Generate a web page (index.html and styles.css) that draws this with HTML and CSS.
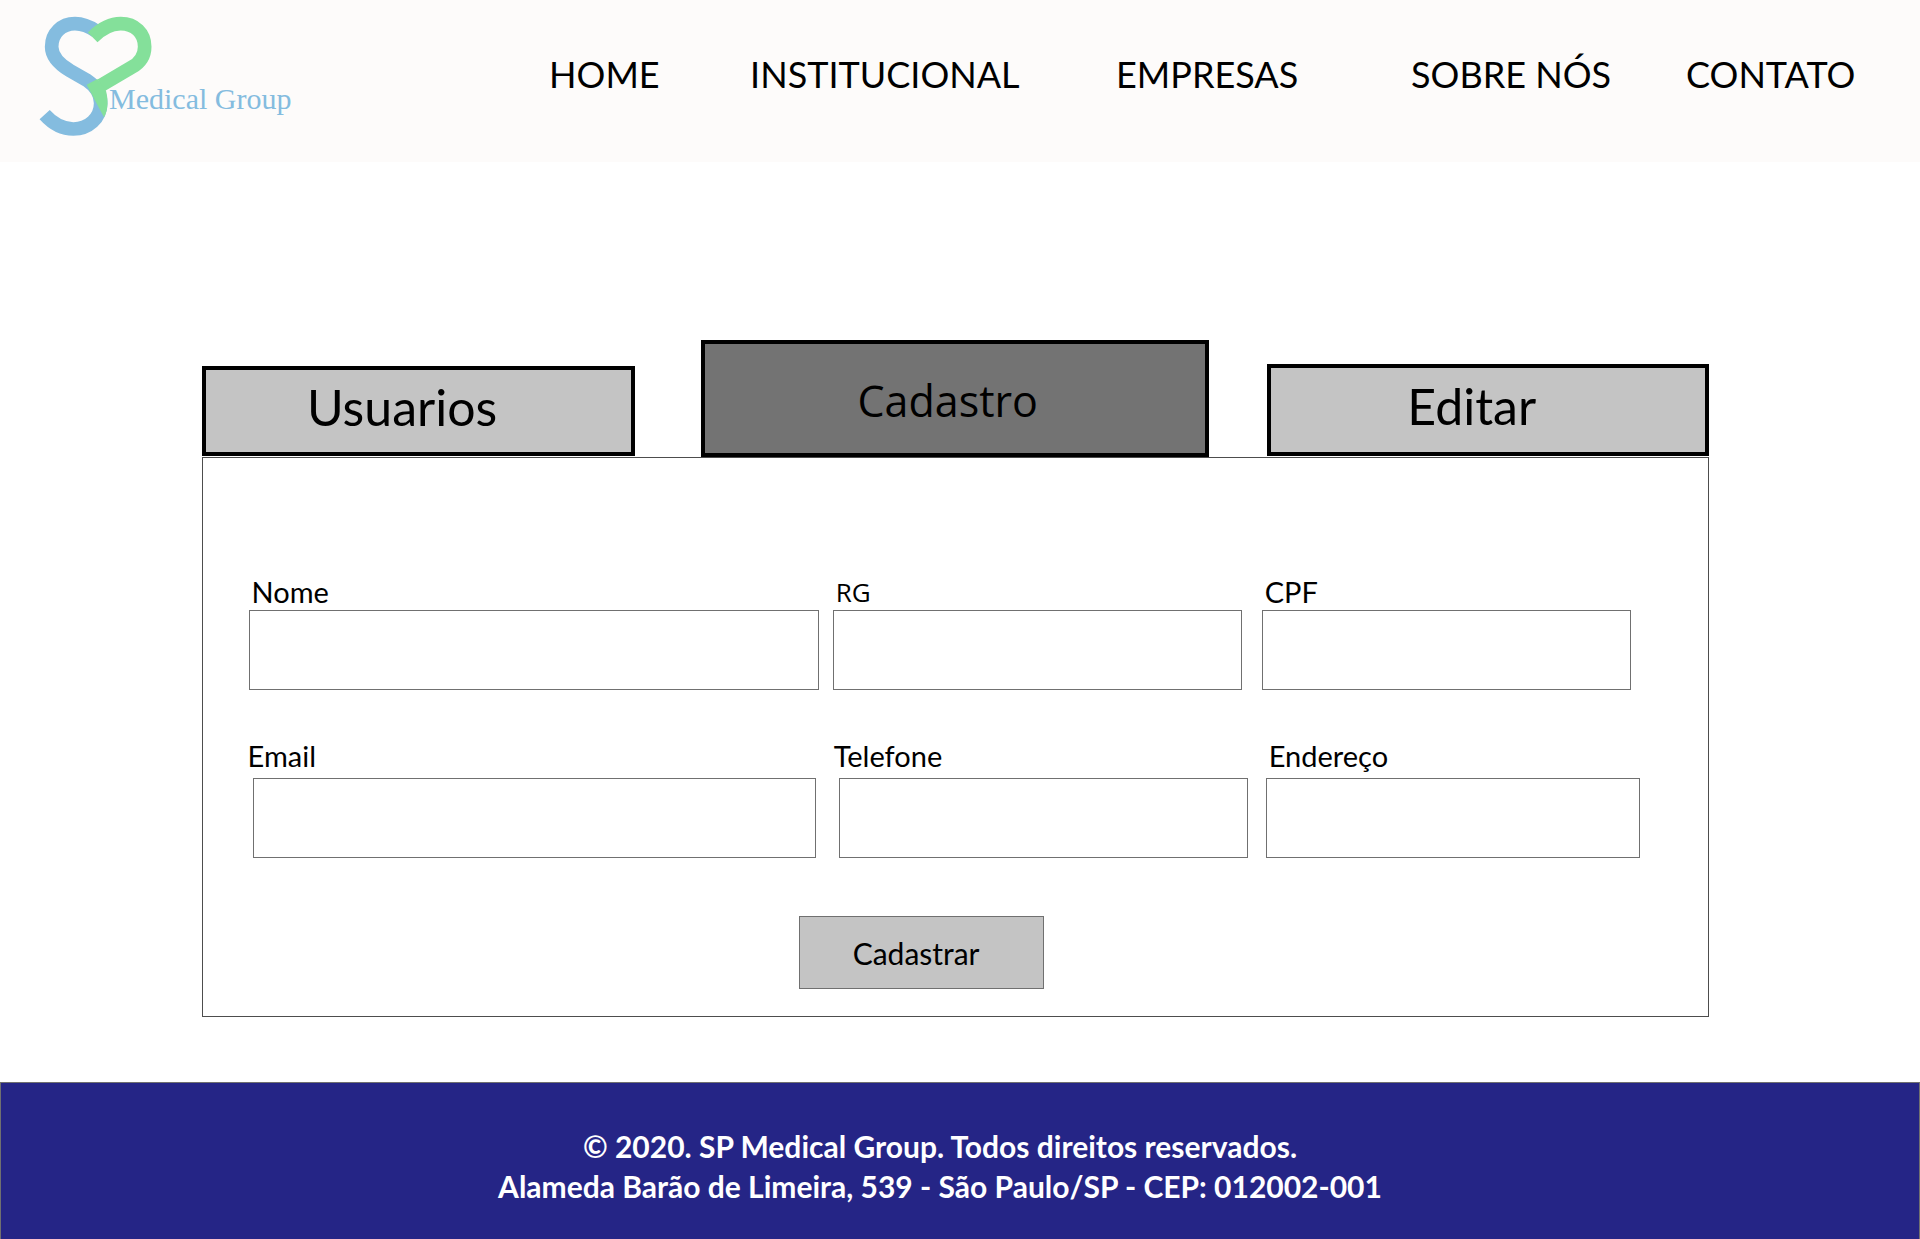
FILE: index.html
```html
<!DOCTYPE html>
<html lang="pt-BR">
<head>
  <meta charset="utf-8">
  <meta name="viewport" content="width=device-width, initial-scale=1">
  <title>SP Medical Group - Cadastro</title>
  <link rel="stylesheet" href="styles.css">
</head>
<body>
  <header class="header">
    <a class="logo" href="#" aria-label="SP Medical Group">
      <svg class="logo-art" viewBox="0 0 300 160" width="300" height="160" role="img" aria-hidden="true">
        <g transform="scale(.33333)" fill="none" stroke-width="41">
          <path stroke="#84bcdf" d="M288 93C266 78 246 71 225 71C185 71 155 100 155 140C155 172 182 195 210 212L262 242C290 261 302 285 302 310C302 355 265 387 220 387C190 387 160 373 134 344"/>
          <path stroke="#84e09a" d="M278 112C305 85 335 71 362 71C405 71 434 100 434 140C434 168 420 188 395 202L303 256"/>
          <path fill="#84e09a" stroke="none" d="M260 254L292 237L318 272C325 300 325 328 312 352Z"/>
        </g>
        <text class="logo-text" x="109" y="109">Medical Group</text>
      </svg>
    </a>
    <nav class="nav">
      <a href="#">HOME</a>
      <a href="#">INSTITUCIONAL</a>
      <a href="#">EMPRESAS</a>
      <a href="#">SOBRE NÓS</a>
      <a href="#">CONTATO</a>
    </nav>
  </header>

  <main class="main">
    <div class="tabs">
      <button class="tab tab-users" type="button">Usuarios</button>
      <button class="tab tab-register" type="button">Cadastro</button>
      <button class="tab tab-edit" type="button">Editar</button>
    </div>
    <form class="panel">
      <div class="row row-identity">
        <div class="field"><label for="nome">Nome</label><input id="nome" type="text"></div>
        <div class="field field-rg"><label for="rg">RG</label><input id="rg" type="text"></div>
        <div class="field field-cpf"><label for="cpf">CPF</label><input id="cpf" type="text"></div>
      </div>
      <div class="row row-contact">
        <div class="field field-outdent field-email"><label for="email">Email</label><input id="email" type="email"></div>
        <div class="field field-outdent"><label for="telefone">Telefone</label><input id="telefone" type="tel"></div>
        <div class="field"><label for="endereco">Endereço</label><input id="endereco" type="text"></div>
      </div>
      <button class="submit" type="submit">Cadastrar</button>
    </form>
  </main>

  <footer class="footer">
    <p>© 2020. SP Medical Group. Todos direitos reservados.</p>
    <p>Alameda Barão de Limeira, 539 - São Paulo/SP - CEP: 012002-001</p>
  </footer>
</body>
</html>
```

FILE: styles.css
```css
* {
  box-sizing: border-box;
}

body {
  margin: 0;
  background: #fff;
  color: #000;
  font-family: "Trebuchet MS", Lato, sans-serif;
}

button,
input {
  font: inherit;
  color: inherit;
  border-radius: 0;
}

/* Header */
.header {
  display: flex;
  min-height: 162px;
  background: #fdfbfa;
}

.logo {
  flex: 0 0 28.6%;
}

.logo-art {
  display: block;
}

.logo-text {
  fill: #84bcdf;
  font-family: "Liberation Serif", serif;
  font-size: 30px;
}

.nav {
  flex: 1;
  display: grid;
  grid-template-columns: 201fr 366fr 295fr 275fr 234fr;
  align-items: start;
  padding-top: 50px;
}

.nav a {
  color: inherit;
  font-size: 36px;
  line-height: 48px;
  text-decoration: none;
  white-space: nowrap;
}

/* Tabs */
.main {
  padding: 178px 11% 65px 10.5%;
}

.tabs {
  display: grid;
  grid-template-columns: 433fr 66fr 508fr 58fr 442fr;
  align-items: end;
}

.tab {
  height: 90px;
  margin-bottom: 1px;
  padding: 0 32px 8px 0;
  border: 4px solid #000;
  background: #c4c4c4;
  font-size: 50px;
  line-height: 56px;
}

.tab-users {
  grid-column: 1;
}

.tab-register {
  grid-column: 3;
  height: 117px;
  margin-bottom: 0;
  padding: 4px 14px 0 0;
  background: #737373;
  font-family: "Open Sans", sans-serif;
  font-size: 43px;
}

.tab-edit {
  grid-column: 5;
  height: 92px;
}

/* Form */
.panel {
  padding: 118px 68px 27px 46px;
  border: 1px solid #4d4d4d;
}

.row {
  display: grid;
}

.row-identity {
  grid-template-columns: 570fr 409fr 375fr;
  column-gap: 14px;
  padding-right: 9px;
}

.row-contact {
  grid-template-columns: 568fr 409fr 374fr;
  column-gap: 18px;
  margin-top: 50px;
  padding-left: 4px;
}

.field {
  display: flex;
  flex-direction: column;
  gap: 2px;
}

.row-contact .field {
  gap: 6px;
}

.field label {
  padding-left: 3px;
  font-size: 29px;
  line-height: 32px;
}

.field-rg label {
  font-family: "Open Sans", sans-serif;
  font-size: 26px;
}

.field-cpf {
  padding-left: 6px;
}

.field-email {
  padding-right: 5px;
}

.field-outdent label {
  margin-left: -5px;
  padding-left: 0;
}

.field input {
  width: 100%;
  height: 80px;
  padding: 0 16px;
  border: 1px solid #707070;
  background: #fff;
  font-size: 29px;
}

.submit {
  display: block;
  width: 245px;
  height: 73px;
  margin: 58px 0 0 550px;
  padding: 0 10px 0 0;
  border: 1px solid #707070;
  background: #c4c4c4;
  font-size: 30px;
}

/* Footer */
.footer {
  padding: 43px 40px 33px 0;
  border: 1px solid #707070;
  background: #252586;
  color: #fff;
  font-size: 30px;
  font-weight: 700;
  line-height: 40px;
  text-align: center;
}

.footer p {
  margin: 0;
}
```
